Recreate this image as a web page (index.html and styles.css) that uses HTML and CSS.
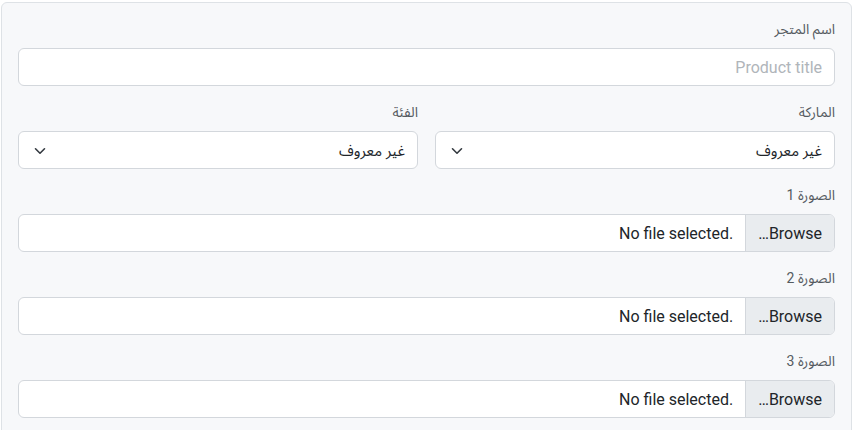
FILE: index.html
```html
<!DOCTYPE html>
<html lang="ar" dir="rtl">
<head>
<meta charset="utf-8">
<link rel="stylesheet" href="styles.css">
</head>
<body>
<div class="page">
  <form class="card">
    <div class="group">
      <label class="label">اسم المتجر</label>
      <div class="control placeholder">Product title</div>
    </div>
    <div class="row">
      <div class="group">
        <label class="label">الماركة</label>
        <div class="control select">
          <span class="ar">غير معروف</span>
          <svg class="chev" viewBox="0 0 12 8"><path d="M1.5 1.75l4.5 4.5 4.5-4.5" fill="none" stroke="#343a40" stroke-width="1.6" stroke-linecap="round" stroke-linejoin="round"/></svg>
        </div>
      </div>
      <div class="group">
        <label class="label">الفئة</label>
        <div class="control select">
          <span class="ar">غير معروف</span>
          <svg class="chev" viewBox="0 0 12 8"><path d="M1.5 1.75l4.5 4.5 4.5-4.5" fill="none" stroke="#343a40" stroke-width="1.6" stroke-linecap="round" stroke-linejoin="round"/></svg>
        </div>
      </div>
    </div>
    <div class="group">
      <label class="label">الصورة 1</label>
      <div class="file">
        <span class="browse">Browse…</span>
        <span class="fname"><bdi dir="ltr">No file selected.</bdi></span>
      </div>
    </div>
    <div class="group">
      <label class="label">الصورة 2</label>
      <div class="file">
        <span class="browse">Browse…</span>
        <span class="fname"><bdi dir="ltr">No file selected.</bdi></span>
      </div>
    </div>
    <div class="group">
      <label class="label">الصورة 3</label>
      <div class="file">
        <span class="browse">Browse…</span>
        <span class="fname"><bdi dir="ltr">No file selected.</bdi></span>
      </div>
    </div>
  </form>
</div>
</body>
</html>
```
FILE: styles.css
```css
html, body {
  margin: 0;
  padding: 0;
  background: #ffffff;
}
body {
  font-family: Roboto, "Noto Sans Arabic", "Noto Naskh Arabic", "Noto Sans", "DejaVu Sans", sans-serif;
  color: #212529;
  font-size: 16px;
}
.page {
  padding: 2px 1px 0 1px;
}
.card {
  display: block;
  background: #f7f8fa;
  border: 1px solid #dee2e6;
  border-radius: 6px;
  padding: 16px 16px 40px 16px;
}
.group {
  margin-bottom: 16px;
}
.label {
  display: block;
  font-size: 14px;
  line-height: 21px;
  margin-bottom: 8px;
  color: #555b61;
}
.control {
  box-sizing: border-box;
  height: 38px;
  background: #fff;
  border: 1px solid #d3d7dc;
  border-radius: 6px;
  padding: 1px 12px 0 12px;
  display: flex;
  align-items: center;
  line-height: 24px;
}
.placeholder {
  color: #b0b5ba;
}
.row {
  display: grid;
  grid-template-columns: 1fr 1fr;
  column-gap: 17px;
}
.select {
  justify-content: space-between;
  padding-left: 15px;
}
.ar {
  font-size: 15px;
}
.chev {
  display: block;
  width: 12px;
  height: 8px;
}
.file {
  box-sizing: border-box;
  height: 38px;
  background: #fff;
  border: 1px solid #d3d7dc;
  border-radius: 6px;
  display: flex;
  align-items: stretch;
  overflow: hidden;
  line-height: 24px;
}
.browse {
  display: flex;
  align-items: center;
  padding: 1px 12px 0 12px;
  background: #e9ecef;
  border-left: 1px solid #d3d7dc;
}
.fname {
  display: flex;
  align-items: center;
  padding: 1px 12px 0 12px;
}
```
